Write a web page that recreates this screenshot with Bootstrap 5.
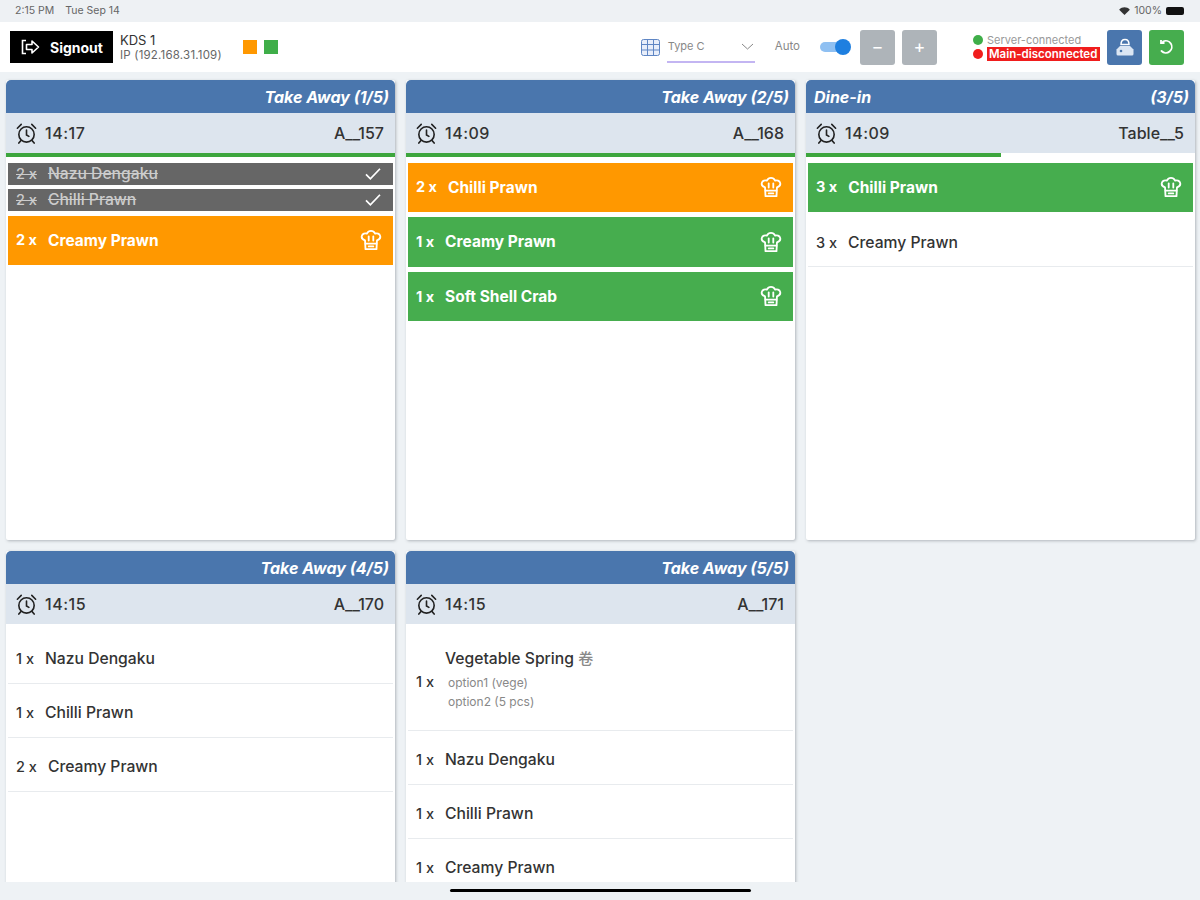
<!DOCTYPE html>
<html lang="en">
<head>
<meta charset="utf-8">
<title>KDS</title>
<link href="https://cdn.jsdelivr.net/npm/bootstrap@5.3.0/dist/css/bootstrap.min.css" rel="stylesheet">
<style>
html,body{height:900px;overflow:hidden}
body{background:#eef2f5;font-family:Inter,"Liberation Sans",sans-serif;color:#222}
.status-strip{height:22px;padding:0 16px 0 15px;font-size:10.500px;color:#666;background:#eef1f4}
.status-strip .st-gap{gap:11px}
.batt{width:18px;height:8px;background:#111;border-radius:2px;display:block}
.top-strip{height:50px;background:#fff;padding:0 16px 0 10px}
.sign-btn{width:103px;height:32px;background:#000;color:#fff;font-size:14px;font-weight:700;border-radius:0;padding:0 0 0 1px;gap:10px}
.sign-btn:hover{background:#000;color:#fff}
.kds-name{font-size:13px;line-height:15px;color:#333}
.kds-ip{font-size:11.500px;line-height:14px;color:#666;letter-spacing:.2px}
.kds-box{margin-left:7px}
.sq{width:14px;height:14px;display:block}
.sq-o{background:#ff9800;margin-left:21px}.sq-g{background:#3fae49;margin-left:7px}
.grid-ico{margin-right:7px}
.type-box{width:88px;height:29px;border-bottom:2px solid #c3b5f2;font-size:11px;color:#888;padding:0 1px 3px 1px;margin-top:3px}
.auto-lbl{font-size:11.500px;color:#888;margin-left:20px}
.sw-track{width:31px;height:18px;position:relative;display:block;margin-left:20px}
.sw-track::before{content:"";position:absolute;left:0;top:4px;width:28px;height:10px;border-radius:5px;background:#8fc0f2}
.sw-track::after{content:"";position:absolute;right:0;top:1px;width:16px;height:16px;border-radius:50%;background:#1e7fe0}
.sq-btn{width:35px;height:35px;padding:0;border:0;border-radius:3px;color:#fff;margin-left:7px}
.sq-btn:hover{color:#fff}
.b-gray,.b-gray:hover{background:#aeb4b9;font-size:18px;line-height:1}
.b-first{margin-left:9px}
.b-blue,.b-blue:hover{background:#4a76ad}
.b-green,.b-green:hover{background:#46ad4e}
.dot{width:10px;height:10px;border-radius:50%;display:block}
.dot-g{background:#3fae49}.dot-r{background:#f01d1d}
.srv-box{margin-left:36px}
.srv{font-size:11px;line-height:14px;color:#999;white-space:nowrap}
.mainb{width:113px;font-size:11.500px;line-height:14px;color:#fff;background:#f01d1d;font-weight:600;padding-left:2px;white-space:nowrap;overflow:hidden}
.board{display:grid;grid-template-columns:repeat(3,389px);grid-template-rows:460px 460px;column-gap:11px;row-gap:11px;height:810px;padding:8px 0 0 6px;overflow:hidden}
.ticket{border:0;border-radius:2px;box-shadow:1px 1px 3px rgba(60,70,80,.35);overflow:hidden;background:#fff}
.tk-head{height:33px;background:#4a76ad;color:#fff;font-style:italic;font-weight:700;font-size:16px;padding:0 6px 0 8px;border:0;border-radius:0}
.tk-sub{height:40px;background:#dde5ee;padding:0 11px 0 9px;font-size:16px;font-weight:500;color:#333}
.tk-sub .tm{margin-left:7px;letter-spacing:.5px}
.prog{height:4px;background:#fff;border-radius:0}
.prog .progress-bar{background:#3da63d}
.lines{padding:5.500px 2px 0;--bs-list-group-bg:transparent;border-radius:0}
.ln{display:flex;align-items:center;padding:0 11px 0 8px;font-size:15.700px;font-weight:500;border:0;color:#333;background:#fff}
.qt{flex:none;white-space:pre;margin-right:11px;font-size:14.500px}
.ln .nm{flex:1}
.ln-done{height:22px;background:#666;color:#ccc;margin-bottom:4.500px;text-decoration:line-through}
.ln-o,.ln-g{height:49.600px;color:#fff;font-weight:700;margin-bottom:5px;font-size:15.500px}
.ln-o{background:#ff9800}
.ln-g{background:#46ad4e}
.ln-w{height:54px;border-bottom:1px solid #e8ebee;padding-top:4px}
.ln-short{height:50px;padding-top:3px}
.lines-w{padding-top:2px}
.ln-big{height:101px;border-bottom:1px solid #e8ebee}
.ln-big .qt{padding-top:3px}
.ln-big .nm{padding-bottom:3px}
.opt{font-size:12px;line-height:19px;color:#888;padding-left:3px;font-weight:400}
.veg-nm{line-height:22px;margin-bottom:3px}
.han{font-family:"Noto Sans CJK SC",sans-serif;font-size:15px;color:#888}
.home-strip{height:18px;background:#eef2f5;position:relative}
.home-bar{position:absolute;left:450px;top:7px;width:301px;height:3px;background:#000;border-radius:2px}
.ico{display:block;flex:none}
</style>
</head>
<body>
<svg width="0" height="0" class="position-absolute">
<defs>
<symbol id="alarm" viewBox="0 0 24 24"><g fill="none" stroke="#222" stroke-width="1.700" stroke-linecap="round"><circle cx="12" cy="13" r="8"/><path d="M12 8.500V13.500L14.500 15"/><path d="M2.500 6.500 6.500 2.500M21.500 6.500 17.500 2.500M6 19.500 4 22M18 19.500 20 22"/></g></symbol>
<symbol id="chef" viewBox="0 0 24 24"><g fill="none" stroke="#fff" stroke-width="2" stroke-linecap="round" stroke-linejoin="round"><path d="M5.500 12.500C2.500 11.500 1.500 9.500 2 7.500 2.700 5 5.500 4.300 7.500 5 8.500 3 10 2 12 2S15.500 3 16.500 5C18.500 4.300 21.300 5 22 7.500 22.500 9.500 21.500 11.500 18.500 12.500L18 22H6Z"/><path d="M6 16H18"/><path d="M9.500 8V12.500M14.500 8V12.500"/><path d="M9.500 19H14.500"/></g></symbol>
<symbol id="tick" viewBox="0 0 20 16"><path d="M2 8.500 7 13.500 18 2" fill="none" stroke="#fff" stroke-width="2"/></symbol>
</defs>
</svg>

<div class="status-strip d-flex align-items-center justify-content-between">
  <div class="d-flex st-gap"><span>2:15 PM</span><span>Tue Sep 14</span></div>
  <div class="d-flex align-items-center gap-1">
    <svg class="ico" width="11" height="8" viewBox="0 0 12 9"><path d="M0 3C3.500-.5 8.500-.5 12 3L6 9Z" fill="#333"/></svg>
    <span>100%</span><span class="batt"></span>
  </div>
</div>

<div class="top-strip d-flex align-items-center">
  <button class="btn sign-btn d-flex align-items-center justify-content-center" type="button">
    <svg class="ico" width="19" height="16" viewBox="0 0 19 16"><g fill="none" stroke="#fff" stroke-width="1.600"><path d="M5 1.500H1.500V14.500H5"/><path d="M5.500 5.500H11V2L17.500 8 11 14V10.500H5.500Z" stroke-linejoin="round"/></g></svg>
    Signout
  </button>
  <div class="kds-box">
    <div class="kds-name">KDS 1</div>
    <div class="kds-ip">IP (192.168.31.109)</div>
  </div>
  <span class="sq sq-o"></span>
  <span class="sq sq-g"></span>

  <div class="ms-auto d-flex align-items-center">
    <svg class="ico grid-ico" width="19" height="17" viewBox="0 0 19 17"><g fill="#e8eefa" stroke="#5f86c4" stroke-width="1"><rect x=".5" y=".5" width="18" height="16" rx="2"/><path d="M.5 5.500H18.500M.5 11H18.500M6.500.5V16.500M12.500.5V16.500" fill="none"/></g></svg>
    <div class="type-box d-flex align-items-center justify-content-between">
      <span>Type C</span>
      <svg class="ico" width="13" height="7" viewBox="0 0 13 7"><path d="M1 1 6.500 6 12 1" fill="none" stroke="#888" stroke-width="1"/></svg>
    </div>
    <span class="auto-lbl">Auto</span>
    <span class="sw-track"></span>
    <button class="btn sq-btn b-gray b-first" type="button">−</button>
    <button class="btn sq-btn b-gray" type="button">+</button>
    <div class="srv-box">
      <div class="d-flex align-items-center gap-1"><span class="dot dot-g"></span><span class="srv">Server-connected</span></div>
      <div class="d-flex align-items-center gap-1"><span class="dot dot-r"></span><span class="mainb">Main-disconnected</span></div>
    </div>
    <button class="btn sq-btn b-blue d-flex align-items-center justify-content-center" type="button">
      <svg class="ico" width="18" height="18" viewBox="0 0 18 18"><path d="M5 6.500C5 3.500 6.500 1.500 9 1.500S13 3.500 13 6.500Z" fill="none" stroke="#fff" stroke-width="1.500"/><path d="M4 8H14L17.500 11.500V16A1.500 1.500 0 0 1 16 17.500H2A1.500 1.500 0 0 1 .5 16V11.500Z" fill="#dbe6f3"/><circle cx="5" cy="13" r="1.300" fill="#4a76ad"/></svg>
    </button>
    <button class="btn sq-btn b-green d-flex align-items-center justify-content-center" type="button">
      <svg class="ico" width="16" height="16" viewBox="0 0 16 16"><path d="M4 2.500A6 6 0 1 1 2.500 12" fill="none" stroke="#fff" stroke-width="1.800" stroke-linecap="round"/><path d="M2 1V4H5.500" fill="none" stroke="#fff" stroke-width="1.800"/></svg>
    </button>
  </div>
</div>

<main class="board">
  <!-- 1 -->
  <section class="card ticket">
    <div class="card-header tk-head d-flex align-items-center justify-content-end"><span>Take Away (1/5)</span></div>
    <div class="tk-sub d-flex align-items-center justify-content-between">
      <div class="d-flex align-items-center"><svg class="ico" width="23" height="23"><use href="#alarm"/></svg><span class="tm">14:17</span></div><span>A__157</span>
    </div>
    <div class="progress prog"><div class="progress-bar" style="width:100%"></div></div>
    <div class="list-group lines">
      <div class="ln ln-done"><span class="qt">2 x</span><span class="nm">Nazu Dengaku</span><svg class="ico" width="18" height="14"><use href="#tick"/></svg></div>
      <div class="ln ln-done"><span class="qt">2 x</span><span class="nm">Chilli Prawn</span><svg class="ico" width="18" height="14"><use href="#tick"/></svg></div>
      <div class="ln ln-o"><span class="qt">2 x</span><span class="nm">Creamy Prawn</span><svg class="ico" width="22" height="24"><use href="#chef"/></svg></div>
    </div>
  </section>
  <!-- 2 -->
  <section class="card ticket">
    <div class="card-header tk-head d-flex align-items-center justify-content-end"><span>Take Away (2/5)</span></div>
    <div class="tk-sub d-flex align-items-center justify-content-between">
      <div class="d-flex align-items-center"><svg class="ico" width="23" height="23"><use href="#alarm"/></svg><span class="tm">14:09</span></div><span>A__168</span>
    </div>
    <div class="progress prog"><div class="progress-bar" style="width:100%"></div></div>
    <div class="list-group lines">
      <div class="ln ln-o"><span class="qt">2 x</span><span class="nm">Chilli Prawn</span><svg class="ico" width="22" height="24"><use href="#chef"/></svg></div>
      <div class="ln ln-g"><span class="qt">1 x</span><span class="nm">Creamy Prawn</span><svg class="ico" width="22" height="24"><use href="#chef"/></svg></div>
      <div class="ln ln-g"><span class="qt">1 x</span><span class="nm">Soft Shell Crab</span><svg class="ico" width="22" height="24"><use href="#chef"/></svg></div>
    </div>
  </section>
  <!-- 3 -->
  <section class="card ticket">
    <div class="card-header tk-head d-flex align-items-center justify-content-between"><span>Dine-in</span><span>(3/5)</span></div>
    <div class="tk-sub d-flex align-items-center justify-content-between">
      <div class="d-flex align-items-center"><svg class="ico" width="23" height="23"><use href="#alarm"/></svg><span class="tm">14:09</span></div><span>Table__5</span>
    </div>
    <div class="progress prog"><div class="progress-bar" style="width:50%"></div></div>
    <div class="list-group lines">
      <div class="ln ln-g"><span class="qt">3 x</span><span class="nm">Chilli Prawn</span><svg class="ico" width="22" height="24"><use href="#chef"/></svg></div>
      <div class="ln ln-w ln-short"><span class="qt">3 x</span><span class="nm">Creamy Prawn</span></div>
    </div>
  </section>
  <!-- 4 -->
  <section class="card ticket">
    <div class="card-header tk-head d-flex align-items-center justify-content-end"><span>Take Away (4/5)</span></div>
    <div class="tk-sub d-flex align-items-center justify-content-between">
      <div class="d-flex align-items-center"><svg class="ico" width="23" height="23"><use href="#alarm"/></svg><span class="tm">14:15</span></div><span>A__170</span>
    </div>
    <div class="progress prog"><div class="progress-bar" style="width:0%"></div></div>
    <div class="list-group lines lines-w">
      <div class="ln ln-w"><span class="qt">1 x</span><span class="nm">Nazu Dengaku</span></div>
      <div class="ln ln-w"><span class="qt">1 x</span><span class="nm">Chilli Prawn</span></div>
      <div class="ln ln-w"><span class="qt">2 x</span><span class="nm">Creamy Prawn</span></div>
    </div>
  </section>
  <!-- 5 -->
  <section class="card ticket">
    <div class="card-header tk-head d-flex align-items-center justify-content-end"><span>Take Away (5/5)</span></div>
    <div class="tk-sub d-flex align-items-center justify-content-between">
      <div class="d-flex align-items-center"><svg class="ico" width="23" height="23"><use href="#alarm"/></svg><span class="tm">14:15</span></div><span>A__171</span>
    </div>
    <div class="progress prog"><div class="progress-bar" style="width:0%"></div></div>
    <div class="list-group lines lines-w">
      <div class="ln ln-big"><span class="qt">1 x</span><div class="nm"><div class="veg-nm">Vegetable Spring <span class="han">卷</span></div><div class="opt">option1 (vege)</div><div class="opt">option2 (5 pcs)</div></div></div>
      <div class="ln ln-w"><span class="qt">1 x</span><span class="nm">Nazu Dengaku</span></div>
      <div class="ln ln-w"><span class="qt">1 x</span><span class="nm">Chilli Prawn</span></div>
      <div class="ln ln-w"><span class="qt">1 x</span><span class="nm">Creamy Prawn</span></div>
    </div>
  </section>
</main>

<div class="home-strip"><div class="home-bar"></div></div>
<script src="https://cdn.jsdelivr.net/npm/bootstrap@5.3.0/dist/js/bootstrap.bundle.min.js"></script>
</body>
</html>
